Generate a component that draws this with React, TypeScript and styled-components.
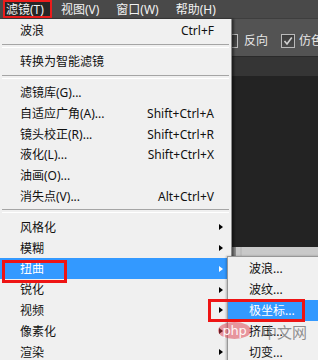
import React from "react";
import styled, { createGlobalStyle } from "styled-components";

const GlobalStyle = createGlobalStyle`
  html, body { margin: 0; padding: 0; background: #232323; overflow: hidden; }
  * { box-sizing: border-box; }
`;

const UI_FONT = `"Noto Sans", "Noto Sans CJK SC", sans-serif`;

const Page = styled.div`
  position: relative;
  width: 318px;
  height: 360px;
  overflow: hidden;
  display: grid;
  grid-template-rows: 19px 1fr;
  font-family: ${UI_FONT};
  font-size: 12px;
`;

const MenuBar = styled.div`
  display: flex;
  align-items: stretch;
  padding-left: 3px;
  background: #494949;
  border-bottom: 1px solid #3e3e3e;
`;

const MenuBarItem = styled.div<{ $selected?: boolean }>`
  display: flex;
  align-items: center;
  padding: 0 8px 1px 3px;
  margin-right: 6px;
  height: 18px;
  color: #f2f2f2;
  white-space: nowrap;
  background: ${(p) => (p.$selected ? "#262626" : "transparent")};
  box-shadow: ${(p) => (p.$selected ? "inset 0 0 0 2px #ec1c1c" : "none")};
`;

const Body = styled.div`
  display: flex;
  min-height: 0;
`;

const Dropdown = styled.div`
  width: 232px;
  flex: none;
  background: #f0f0f0;
  padding-top: 1.5px;
  border-right: 1px solid #8c8c8c;
  box-shadow: 2px 0 2px rgba(0, 0, 0, 0.45);
  position: relative;
  z-index: 1;
`;

const Row = styled.div<{ $active?: boolean; $pad?: number }>`
  display: grid;
  grid-template-columns: 1fr auto 17px;
  align-items: center;
  height: 20.8px;
  padding-left: ${(p) => p.$pad ?? 20}px;
  background: ${(p) => (p.$active ? "#3399ff" : "transparent")};
  color: ${(p) => (p.$active ? "#ffffff" : "#111111")};
  white-space: nowrap;
`;

const Label = styled.span`
  line-height: 1;
  padding-top: 1px;
`;

const Shortcut = styled.span`
  line-height: 1;
  padding-top: 1px;
  text-align: right;
`;

const Arrow = styled.span<{ $active?: boolean }>`
  justify-self: start;
  margin-left: 5px;
  width: 0;
  height: 0;
  border-top: 3.5px solid transparent;
  border-bottom: 3.5px solid transparent;
  border-left: 4px solid ${(p) => (p.$active ? "#ffffff" : "#000000")};
`;

const Separator = styled.div`
  height: 10px;
  display: flex;
  align-items: center;
  padding: 0 2px;
  &::after {
    content: "";
    flex: 1;
    height: 2px;
    border-top: 1px solid #a5a5a5;
    border-bottom: 1px solid #ffffff;
    margin-top: -1px;
  }
`;

const Workspace = styled.div`
  flex: 1;
  display: flex;
  flex-direction: column;
  overflow: hidden;
  min-width: 0;
`;

const OptionsBar = styled.div`
  height: 38px;
  flex: none;
  display: flex;
  align-items: center;
  padding-top: 6px;
  background: #535353;
  border-bottom: 1px solid #2a2a2a;
  color: #e6e6e6;
  white-space: nowrap;
`;

const CheckBox = styled.span<{ $first?: boolean }>`
  flex: none;
  width: 14px;
  height: 14px;
  margin-left: ${(p) => (p.$first ? "-8px" : "13px")};
  margin-right: ${(p) => (p.$first ? "6px" : "4px")};
  border: 1px solid #b9b9b9;
  background: linear-gradient(#3c3c3c, #4a4a4a);
  display: flex;
  align-items: center;
  justify-content: center;
`;

const OptionText = styled.span`
  line-height: 1;
`;

const TabBar = styled.div`
  height: 19px;
  flex: none;
  background: #353535;
`;

const Canvas = styled.div`
  flex: none;
  height: 171px;
  background: #232323;
`;

const HScroll = styled.div`
  flex: none;
  height: 9px;
  background: linear-gradient(90deg, #8e8e8e 0 4px, #c6c6c6 4px 8px, #bdbdbd 8px 10px, #c9c9c9 10px);
`;

const Rest = styled.div`
  flex: 1;
  background: #232323;
`;

const Submenu = styled.div`
  position: absolute;
  left: 227px;
  top: 256px;
  width: 110px;
  height: 120px;
  background: #f0f0f0;
  border: 1px solid #979797;
  padding-top: 1.5px;
  box-shadow: -1px 0 2px rgba(0, 0, 0, 0.25);
  z-index: 2;
`;

const RedBox = styled.div<{ $l: number; $t: number; $w: number; $h: number }>`
  position: absolute;
  left: ${(p) => p.$l}px;
  top: ${(p) => p.$t}px;
  width: ${(p) => p.$w}px;
  height: ${(p) => p.$h}px;
  border: 3px solid #ee1414;
  z-index: 3;
  pointer-events: none;
`;

const Watermark = styled.div`
  position: absolute;
  left: 218px;
  top: 322px;
  display: flex;
  align-items: center;
  gap: 11px;
  z-index: 4;
  pointer-events: none;
`;

const PhpOval = styled.span`
  width: 33px;
  height: 17px;
  border-radius: 50%;
  background: rgba(222, 58, 74, 0.5);
  color: rgba(255, 255, 255, 0.95);
  font-family: "DejaVu Sans", sans-serif;
  font-size: 13px;
  line-height: 17px;
  text-align: center;
  letter-spacing: -0.3px;
`;

const WatermarkText = styled.span`
  color: rgba(110, 110, 110, 0.75);
  font-family: "Noto Sans CJK SC", sans-serif;
  font-size: 15px;
  line-height: 1;
  margin-top: 2px;
`;

type Item =
  | "sep"
  | { label: string; shortcut?: string; sub?: boolean; active?: boolean };

const mainItems: Item[] = [
  { label: "波浪", shortcut: "Ctrl+F" },
  "sep",
  { label: "转换为智能滤镜" },
  "sep",
  { label: "滤镜库(G)..." },
  { label: "自适应广角(A)...", shortcut: "Shift+Ctrl+A" },
  { label: "镜头校正(R)...", shortcut: "Shift+Ctrl+R" },
  { label: "液化(L)...", shortcut: "Shift+Ctrl+X" },
  { label: "油画(O)..." },
  { label: "消失点(V)...", shortcut: "Alt+Ctrl+V" },
  "sep",
  { label: "风格化", sub: true },
  { label: "模糊", sub: true },
  { label: "扭曲", sub: true, active: true },
  { label: "锐化", sub: true },
  { label: "视频", sub: true },
  { label: "像素化", sub: true },
  { label: "渲染", sub: true },
];

const subItems = [
  { label: "波浪..." },
  { label: "波纹..." },
  { label: "极坐标...", active: true },
  { label: "挤压..." },
  { label: "切变..." },
];

const Check = () => (
  <svg width="10" height="10" viewBox="0 0 10 10">
    <polyline points="1.5,5 4,8 8.8,1.5" fill="none" stroke="#d0d0d0" strokeWidth="1.6" />
  </svg>
);

export default function App() {
  return (
    <>
      <GlobalStyle />
      <Page>
        <MenuBar>
          <MenuBarItem $selected>滤镜(T)</MenuBarItem>
          <MenuBarItem>视图(V)</MenuBarItem>
          <MenuBarItem>窗口(W)</MenuBarItem>
          <MenuBarItem>帮助(H)</MenuBarItem>
        </MenuBar>
        <Body>
          <Dropdown>
            {mainItems.map((it, i) =>
              it === "sep" ? (
                <Separator key={i} />
              ) : (
                <Row key={i} $active={it.active}>
                  <Label>{it.label}</Label>
                  <Shortcut>{it.shortcut ?? ""}</Shortcut>
                  {it.sub ? <Arrow $active={it.active} /> : <span />}
                </Row>
              )
            )}
          </Dropdown>
          <Workspace>
            <OptionsBar>
              <CheckBox $first />
              <OptionText>反向</OptionText>
              <CheckBox>
                <Check />
              </CheckBox>
              <OptionText>仿色</OptionText>
            </OptionsBar>
            <TabBar />
            <Canvas />
            <HScroll />
            <Rest />
          </Workspace>
        </Body>
        <Submenu>
          {subItems.map((it, i) => (
            <Row key={i} $active={it.active} $pad={21}>
              <Label>{it.label}</Label>
              <span />
              <span />
            </Row>
          ))}
        </Submenu>
        <RedBox $l={2} $t={260} $w={65} $h={23} />
        <RedBox $l={208} $t={299} $w={97} $h={23} />
        <Watermark>
          <PhpOval>php</PhpOval>
          <WatermarkText>中文网</WatermarkText>
        </Watermark>
      </Page>
    </>
  );
}
